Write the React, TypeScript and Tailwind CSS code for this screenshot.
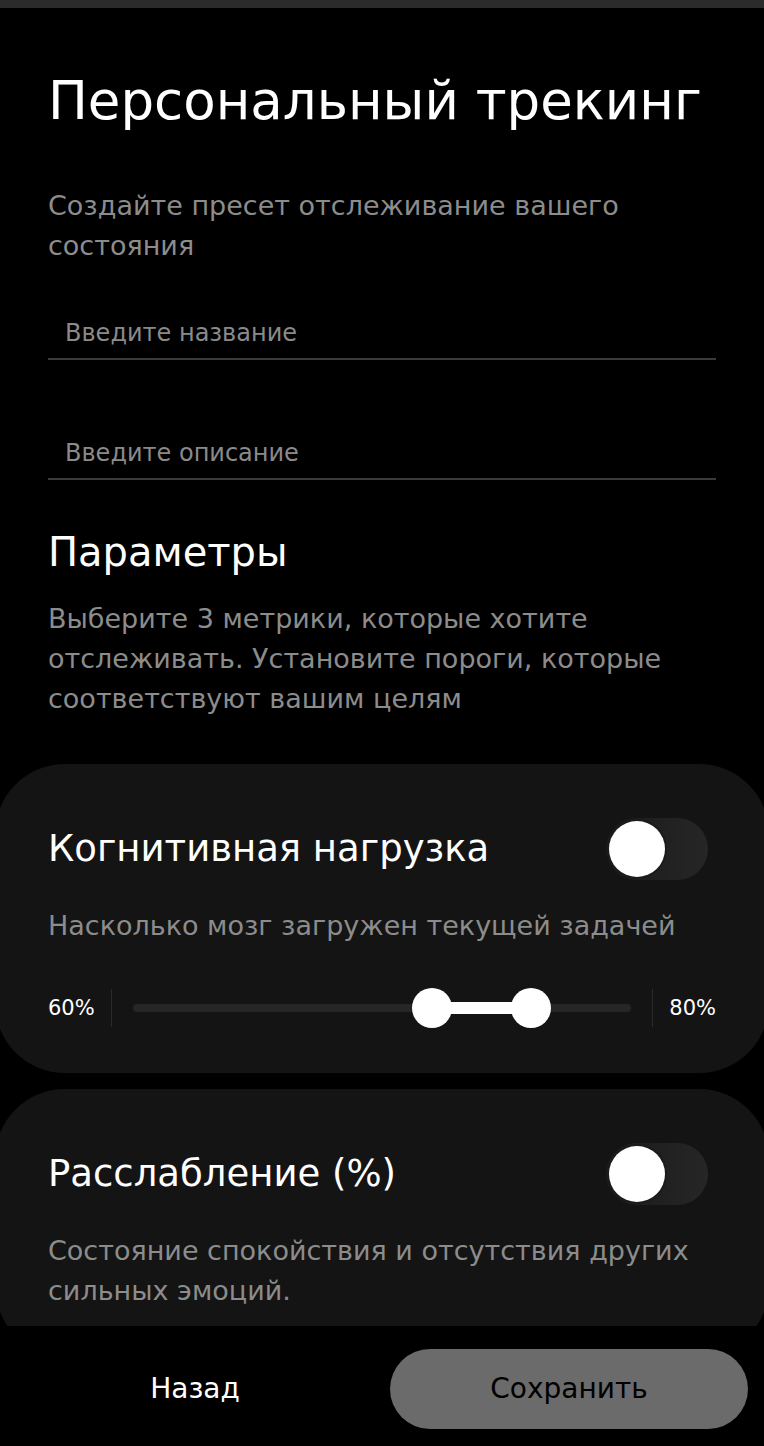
import { useState } from 'react';

/**
 * Ecran "Personal tracking" : creation d'un preset.
 * Header + 2 champs + bloc parametres + cartes metriques, barre d'actions en bas.
 */

const FONT = { fontFamily: '"DejaVu Sans", "Liberation Sans", sans-serif' };

type Metric = {
  id: string;
  title: string;
  description: string;
  range?: [number, number];
};

const METRICS: Metric[] = [
  {
    id: 'cognitive',
    title: 'Когнитивная нагрузка',
    description: 'Насколько мозг загружен текущей задачей',
    range: [60, 80],
  },
  {
    id: 'relax',
    title: 'Расслабление (%)',
    description: 'Состояние спокойствия и отсутствия других сильных эмоций.',
  },
];

function Toggle({ on, onChange }: { on: boolean; onChange: (v: boolean) => void }) {
  return (
    <button
      type="button"
      role="switch"
      aria-checked={on}
      onClick={() => onChange(!on)}
      className="relative mr-[8px] flex h-[62px] w-[102px] shrink-0 items-center rounded-full bg-gradient-to-r from-[#1a1a1a] to-[#262626] p-[3px]"
    >
      <span
        className={
          'h-[56px] w-[56px] rounded-full bg-white shadow-[0_0_0_2px_#1b1b1b] transition-transform ' +
          (on ? 'translate-x-[40px]' : 'translate-x-0')
        }
      />
    </button>
  );
}

function RangeBar({ from, to }: { from: number; to: number }) {
  return (
    <div className="flex h-[40px] items-center">
      <span className="w-[47px] text-[21px] leading-none text-white">{from}%</span>
      <span className="ml-[16px] h-[38px] w-px bg-[#2a2a2a]" />
      <div className="relative mx-[21px] h-[40px] flex-1">
        <div className="absolute inset-x-0 top-1/2 h-[8px] -translate-y-1/2 rounded-full bg-[#262626]" />
        <div
          className="absolute top-1/2 h-[12px] -translate-y-1/2 bg-white"
          style={{ left: `${from}%`, width: `${to - from}%` }}
        />
        <span
          className="absolute top-0 h-[40px] w-[40px] -translate-x-1/2 rounded-full bg-white"
          style={{ left: `${from}%` }}
        />
        <span
          className="absolute top-0 h-[40px] w-[40px] -translate-x-1/2 rounded-full bg-white"
          style={{ left: `${to}%` }}
        />
      </div>
      <span className="mr-[16px] h-[38px] w-px bg-[#2a2a2a]" />
      <span className="w-[47px] text-right text-[21px] leading-none text-white">{to}%</span>
    </div>
  );
}

function MetricCard({ metric }: { metric: Metric }) {
  const [on, setOn] = useState(false);
  return (
    <div className="-mx-[53px] rounded-[70px] bg-[#141414] px-[53px] pb-[45px] pt-[54px]">
      <div className="flex h-[62px] items-center justify-between">
        <h3 className="text-[37px] leading-[62px] text-white">{metric.title}</h3>
        <Toggle on={on} onChange={setOn} />
      </div>
      <p className="mt-[26px] text-[27px] leading-[40px] text-[#8c8c8c]">{metric.description}</p>
      {metric.range && (
        <div className="mt-[42px]">
          <RangeBar from={metric.range[0]} to={metric.range[1]} />
        </div>
      )}
    </div>
  );
}

function UnderlineInput({ placeholder }: { placeholder: string }) {
  return (
    <div className="border-b-2 border-[#3a3a3a]">
      <input
        type="text"
        placeholder={placeholder}
        className="h-[50px] w-full bg-transparent px-[17px] text-[24px] text-white outline-none placeholder:text-[#8a8a8a]"
        style={FONT}
      />
    </div>
  );
}

export default function App() {
  return (
    <div className="flex h-[1446px] w-full flex-col overflow-hidden bg-black" style={FONT}>
      <div className="h-[8px] shrink-0 bg-[#2b2b2b]" />

      <main className="min-h-0 flex-1 overflow-hidden px-[48px] pt-[64px]">
        <h1 className="whitespace-nowrap text-[53px] leading-[58px] text-white">Персональный трекинг</h1>
        <p className="mt-[56px] text-[27px] leading-[40px] text-[#8c8c8c]">
          Создайте пресет отслеживание вашего
          <br />
          состояния
        </p>

        <div className="mt-[42px]">
          <UnderlineInput placeholder="Введите название" />
        </div>
        <div className="mt-[68px]">
          <UnderlineInput placeholder="Введите описание" />
        </div>

        <h2 className="mt-[52px] text-[40px] leading-[40px] text-white">Параметры</h2>
        <p className="mt-[27px] text-[27px] leading-[40px] text-[#8c8c8c]">
          Выберите 3 метрики, которые хотите
          <br />
          отслеживать. Установите пороги, которые
          <br />
          соответствуют вашим целям
        </p>

        <div className="mt-[45px] flex flex-col gap-[16px]">
          {METRICS.map((m) => (
            <MetricCard key={m.id} metric={m} />
          ))}
        </div>
      </main>

      <footer className="grid h-[120px] shrink-0 grid-cols-2 gap-[16px] bg-black px-[16px] pt-[23px]">
        <button type="button" className="h-[80px] rounded-full text-[28px] text-white">
          Назад
        </button>
        <button type="button" className="h-[80px] rounded-full bg-[#6b6b6b] text-[28px] text-black">
          Сохранить
        </button>
      </footer>
    </div>
  );
}
